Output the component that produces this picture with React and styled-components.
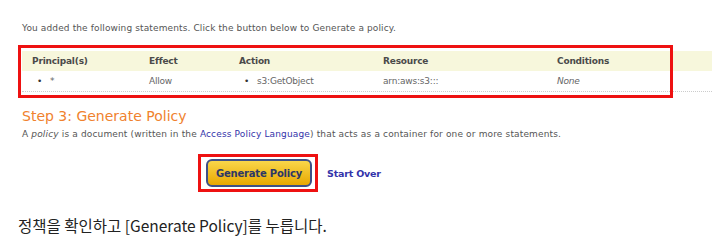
import React from "react";
import styled, { createGlobalStyle } from "styled-components";

const GlobalStyle = createGlobalStyle`
  html, body {
    margin: 0;
    padding: 0;
    background: #ffffff;
  }
`;

const columns = [
  { key: "principal", label: "Principal(s)", width: 117 },
  { key: "effect", label: "Effect", width: 90 },
  { key: "action", label: "Action", width: 144 },
  { key: "resource", label: "Resource", width: 174 },
  { key: "conditions", label: "Conditions", width: 165 },
];

const Page = styled.div`
  width: 724px;
  height: 244px;
  overflow: hidden;
  display: flex;
  flex-direction: column;
`;

const Shot = styled.div`
  padding: 22px 0 0 22px;
  font-family: "DejaVu Sans", Verdana, sans-serif;
  color: #555;
`;

const Intro = styled.p`
  margin: 0;
  font-size: 9px;
  line-height: 12px;
  letter-spacing: 0.12px;
  color: #555;
`;

const TableArea = styled.div`
  position: relative;
  margin-top: 17px;
  width: 690px;
`;

const Annotation = styled.div`
  position: absolute;
  left: ${(p) => p.$left}px;
  top: ${(p) => p.$top}px;
  width: ${(p) => p.$width}px;
  height: ${(p) => p.$height}px;
  border: 3px solid #ee1111;
  box-sizing: border-box;
  pointer-events: none;
`;

const Row = styled.div`
  display: flex;
  height: 20px;
  align-items: center;
  background: ${(p) => (p.$head ? "#f7f7dc" : "#ffffff")};
  border-bottom: ${(p) => (p.$head ? "none" : "1px dotted #ccc")};
`;

const Cell = styled.div`
  flex: 0 0 ${(p) => p.$width}px;
  box-sizing: border-box;
  padding-left: 10px;
  font-size: 9px;
  letter-spacing: -0.2px;
  font-weight: ${(p) => (p.$head ? 700 : 400)};
  font-style: ${(p) => (p.$italic ? "italic" : "normal")};
  color: ${(p) => (p.$head ? "#4a4a4a" : "#666")};
  white-space: nowrap;
`;

const Bullet = styled.span`
  display: inline-block;
  margin: 0 8px 0 5px;
  color: #333;
`;

const Heading = styled.h3`
  margin: 15px 0 0;
  font-size: 14px;
  line-height: 18px;
  font-weight: 400;
  color: #f0822e;
`;

const Desc = styled.p`
  margin: 2px 0 0;
  font-size: 9px;
  line-height: 14px;
  letter-spacing: 0.15px;
  color: #555;
`;

const Link = styled.span`
  color: #3333aa;
`;

const Actions = styled.div`
  display: flex;
  align-items: center;
  gap: 9px;
  margin: 13px 0 0 176px;
`;

const ButtonFrame = styled.div`
  display: flex;
  border: 3px solid #ee1111;
  padding: 2px 3px 2px 5px;
`;

const GenerateButton = styled.button`
  width: 106px;
  height: 28px;
  border: 2px solid #3e4f86;
  border-radius: 6px;
  background: linear-gradient(#f9d64a, #e8a800);
  font-family: "DejaVu Sans", Verdana, sans-serif;
  font-size: 10px;
  font-weight: 700;
  letter-spacing: -0.2px;
  color: #2d3766;
  padding: 0;
`;

const StartOver = styled.span`
  font-size: 9.5px;
  font-weight: 700;
  color: #3333aa;
  letter-spacing: -0.2px;
`;

const Caption = styled.p`
  margin: 23px 0 0 18px;
  font-family: "Noto Sans CJK KR", "Noto Sans", sans-serif;
  font-size: 15.5px;
  line-height: 20px;
  color: #222;
`;

export default function App() {
  return (
    <Page>
      <GlobalStyle />
      <Shot>
        <Intro>You added the following statements. Click the button below to Generate a policy.</Intro>
        <TableArea>
          <Row $head>
            {columns.map((c) => (
              <Cell key={c.key} $width={c.width} $head>
                {c.label}
              </Cell>
            ))}
          </Row>
          <Row>
            <Cell $width={117}>
              <Bullet>•</Bullet>*
            </Cell>
            <Cell $width={90}>Allow</Cell>
            <Cell $width={144}>
              <Bullet>•</Bullet>s3:GetObject
            </Cell>
            <Cell $width={174}>arn:aws:s3:::</Cell>
            <Cell $width={165} $italic>
              None
            </Cell>
          </Row>
          <Annotation $left={-4} $top={-6} $width={655} $height={53} />
        </TableArea>
        <Heading>Step 3: Generate Policy</Heading>
        <Desc>
          A <i>policy</i> is a document (written in the <Link>Access Policy Language</Link>) that acts as a
          container for one or more statements.
        </Desc>
        <Actions>
          <ButtonFrame>
            <GenerateButton>Generate Policy</GenerateButton>
          </ButtonFrame>
          <StartOver>Start Over</StartOver>
        </Actions>
      </Shot>
      <Caption>정책을 확인하고 [Generate Policy]를 누릅니다.</Caption>
    </Page>
  );
}
